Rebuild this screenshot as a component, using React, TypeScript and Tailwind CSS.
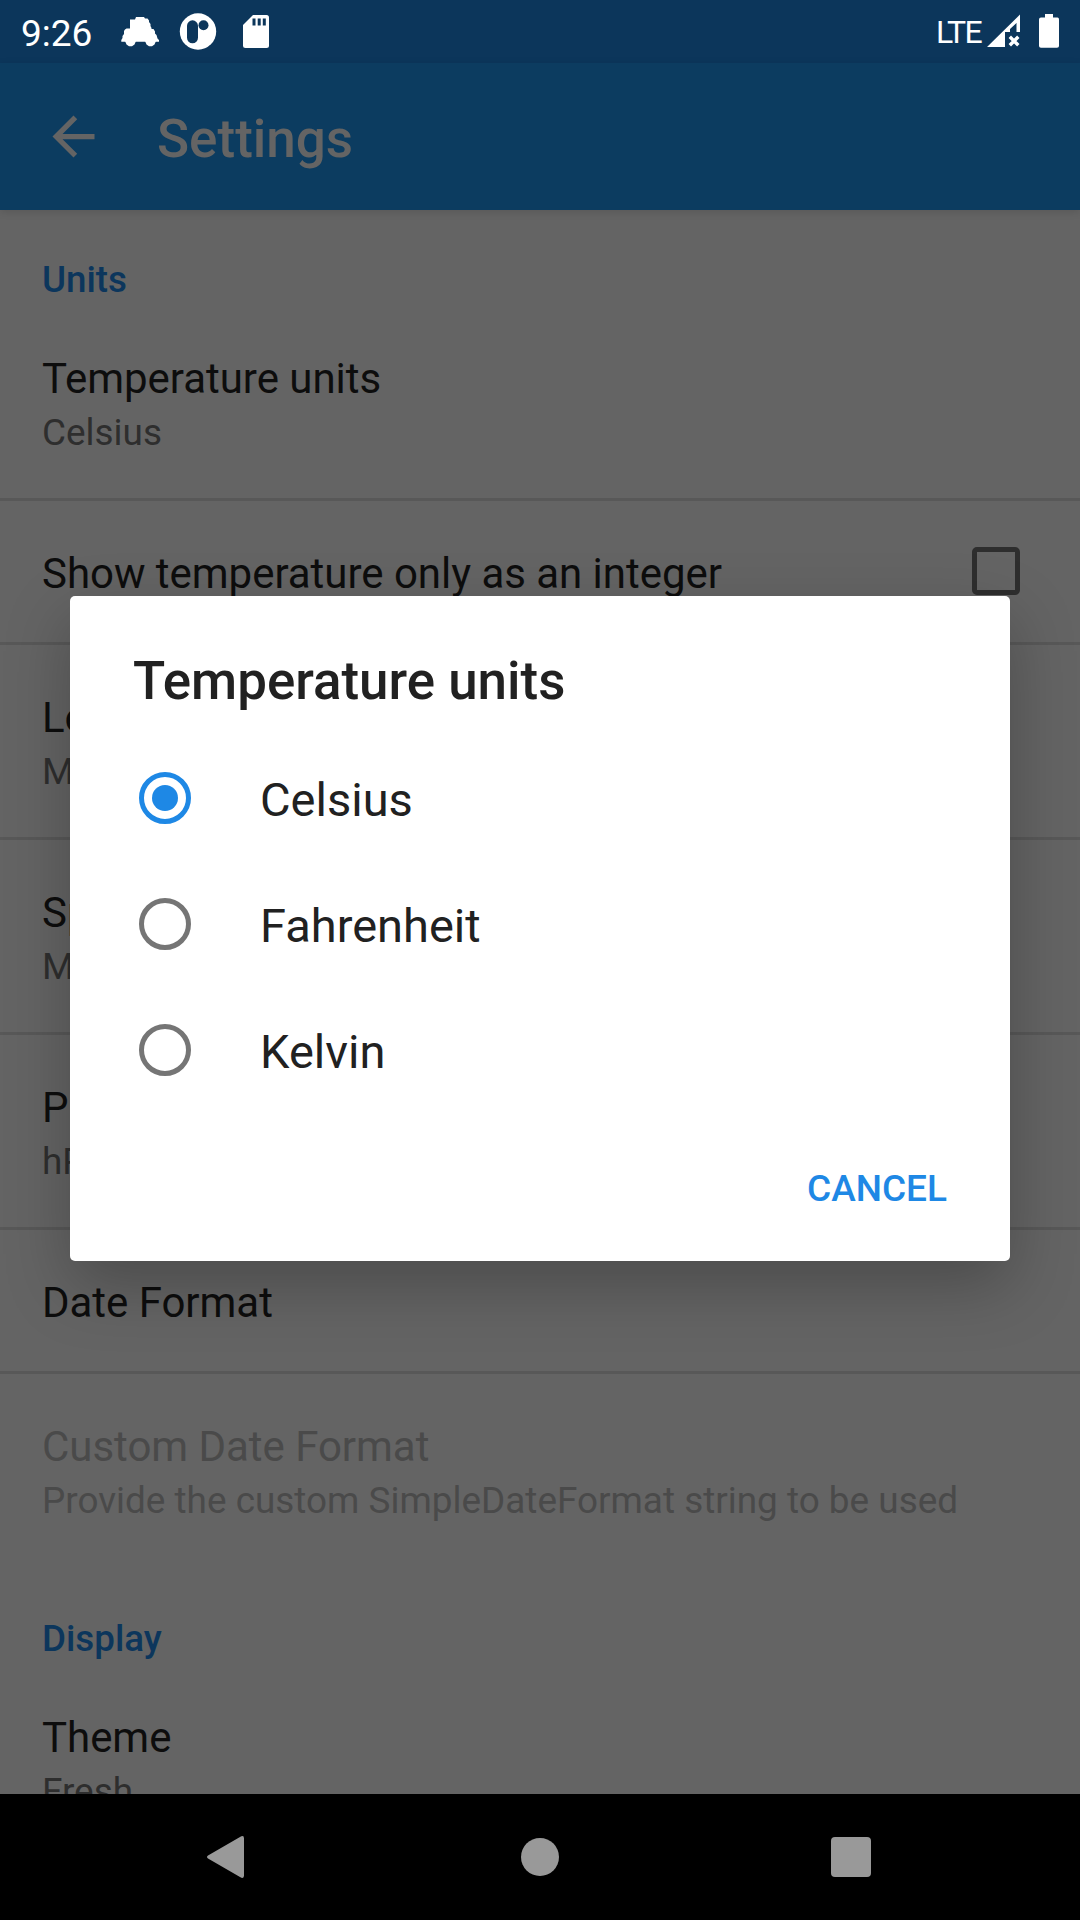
import React from "react";

type Pref = {
  title: string;
  summary?: string;
  checkbox?: boolean;
  disabled?: boolean;
  last?: boolean;
};

const unitPrefs: Pref[] = [
  { title: "Temperature units", summary: "Celsius" },
  { title: "Show temperature only as an integer", checkbox: true },
  { title: "Length units", summary: "Millimeters" },
  { title: "Speed units", summary: "Meters per second" },
  { title: "Pressure units", summary: "hPa/mBar" },
  { title: "Date Format" },
  {
    title: "Custom Date Format",
    summary: "Provide the custom SimpleDateFormat string to be used",
    disabled: true,
    last: true,
  },
];

const options = ["Celsius", "Fahrenheit", "Kelvin"];

function StatusBar() {
  return (
    <header className="flex h-[63px] shrink-0 items-center bg-[#0c365b] text-white">
      <span className="ml-[21px] w-[100px] pt-[4px] text-[37px] leading-[43px]">9:26</span>
      <svg className="h-[63px] w-[38px]" viewBox="121 0 38 63" fill="currentColor">
        <path d="M130 19.500H135L136 17H144L145 18.500H147.500L149 20.500V22L150.500 24V26L151.500 28V29H153.500L155 31.500V33.500L156.500 35L157.500 38.500L159 40V41.700H121.300V40L122.500 38V36L124 34V31L125 29.500L126.500 28.500H130Z" />
        <path d="M125 41H136L134.500 44.500L132 46.300H129L126.500 44.500ZM145 41H156L154.500 44.500L152 46.300H149L146.500 44.500Z" />
      </svg>
      <svg className="ml-[19px] h-[63px] w-[40px]" viewBox="178 0 40 63">
        <circle cx="198" cy="31.500" r="18.200" fill="#fff" />
        <rect x="187" y="20.300" width="11" height="23" rx="5.500" fill="#0c365b" />
        <circle cx="203.500" cy="25.200" r="5" fill="#0c365b" />
      </svg>
      <svg className="ml-[24px] h-[63px] w-[28px]" viewBox="242 0 28 63">
        <path d="M253 15H266.500Q269 15 269 17.500V45.500Q269 48 266.500 48H245.500Q243 48 243 45.500V25Z" fill="#fff" />
        <path d="M252.500 18.500h3v7h-3zM257.700 18.500h3v7h-3zM262.800 18.500h3v7h-3z" fill="#0c365b" />
      </svg>
      <span className="ml-auto mr-[6px] text-[32px] leading-[38px] tracking-[-1.7px]">LTE</span>
      <svg className="h-[63px] w-[34px]" viewBox="987 0 34 63">
        <path d="M987 47L1020 14.500V32H1016.500V23L1010 29V32H1005V47Z" fill="#fff" />
        <path d="M1009.800 36.800L1018.300 45.300M1018.300 36.800L1009.800 45.300" stroke="#fff" strokeWidth="3.400" fill="none" />
      </svg>
      <svg className="ml-[18px] mr-[20px] h-[63px] w-[21px]" viewBox="1039 0 21 63">
        <path d="M1045 14H1053V17.500H1057.500Q1059 17.500 1059 19.500V46Q1059 47.800 1057 47.800H1041Q1039 47.800 1039 46V19.500Q1039 17.500 1041 17.500H1045Z" fill="#fff" />
      </svg>
    </header>
  );
}

function AppBar() {
  return (
    <div className="z-10 flex h-[147px] shrink-0 items-center bg-[#0c3c60] text-[#646464] shadow-[0_2px_8px_rgba(0,0,0,0.12)]">
      <svg className="ml-[42px] h-[63px] w-[63px]" viewBox="0 0 24 24" fill="currentColor">
        <path d="M20 11H7.830l5.590-5.590L12 4l-8 8 8 8 1.410-1.410L7.830 13H20v-2z" />
      </svg>
      <h1 className="ml-[52px] pt-[5px] text-[53px] font-medium leading-[62px]">Settings</h1>
    </div>
  );
}

function SectionTitle({ children }: { children: string }) {
  return (
    <h2 className="h-[96px] px-[42px] pt-[44px] text-[36.75px] font-medium leading-[51px] text-[#0c365c]">
      {children}
    </h2>
  );
}

function PrefRow({ title, summary, checkbox, disabled, last }: Pref) {
  return (
    <div
      className={`flex justify-between border-b-[3px] px-[42px] pb-[40px] pt-[44px] ${
        last ? "border-transparent" : "border-[#585858]"
      }`}
    >
      <div className="whitespace-nowrap">
        <div
          className={`text-[42px] leading-[57px] tracking-[-0.03px] ${disabled ? "text-[#4a4a4a]" : "text-[#0d0d0d]"}`}
        >
          {title}
        </div>
        {summary && (
          <div className={`text-[36.9px] leading-[51px] ${disabled ? "text-[#4a4a4a]" : "text-[#2e2e2e]"}`}>
            {summary}
          </div>
        )}
      </div>
      {checkbox && <span className="mr-[18px] mt-[2px] size-[48px] rounded-[5px] border-[5px] border-[#2e2e2e]" />}
    </div>
  );
}

function Radio({ checked }: { checked: boolean }) {
  return (
    <span
      className={`flex size-[52px] items-center justify-center rounded-full border-[5px] ${
        checked ? "border-[#1e88e5]" : "border-[#757575]"
      }`}
    >
      {checked && <span className="size-[26px] rounded-full bg-[#1e88e5]" />}
    </span>
  );
}

function UnitsDialog() {
  return (
    <div
      role="dialog"
      className="absolute left-[70px] top-[596px] z-20 flex h-[665px] w-[940px] flex-col rounded-[5px] bg-white text-[#212121] shadow-[0_24px_64px_rgba(0,0,0,0.25)]"
    >
      <h2 className="px-[63px] pt-[54px] text-[52.9px] font-medium leading-[62px]">Temperature units</h2>
      <div className="mt-[23px]">
        {options.map((name, i) => (
          <label key={name} className="flex h-[126px] items-center pl-[69px]">
            <Radio checked={i === 0} />
            <span className="ml-[69px] pt-[3px] text-[47px] leading-[56px]">{name}</span>
          </label>
        ))}
      </div>
      <button className="mr-[63px] mt-[54px] self-end text-[37px] font-medium leading-[43px] text-[#1e88e5]">
        CANCEL
      </button>
    </div>
  );
}

function NavBar() {
  return (
    <nav className="z-10 flex h-[126px] shrink-0 items-center bg-black text-[#999999]">
      <svg className="ml-[206px] h-[44px] w-[39px]" viewBox="206 1835 39 44" fill="currentColor">
        <path d="M208 1855.500L240 1837Q244 1834.500 244 1838.500V1875.500Q244 1879.500 240 1877L208 1858.500Q206 1857 208 1855.500Z" />
      </svg>
      <span className="ml-[276px] size-[38px] rounded-full bg-current" />
      <span className="ml-[272px] size-[40px] rounded-[4px] bg-current" />
    </nav>
  );
}

export default function App() {
  return (
    <div className="relative flex h-[1920px] w-[1080px] flex-col overflow-hidden bg-[#646464] font-[Roboto,sans-serif]">
      <StatusBar />
      <AppBar />
      <main className="min-h-0 flex-1 overflow-hidden">
        <SectionTitle>Units</SectionTitle>
        {unitPrefs.map((p) => (
          <PrefRow key={p.title} {...p} />
        ))}
        <SectionTitle>Display</SectionTitle>
        <PrefRow title="Theme" summary="Fresh" />
      </main>
      <NavBar />
      <UnitsDialog />
    </div>
  );
}
